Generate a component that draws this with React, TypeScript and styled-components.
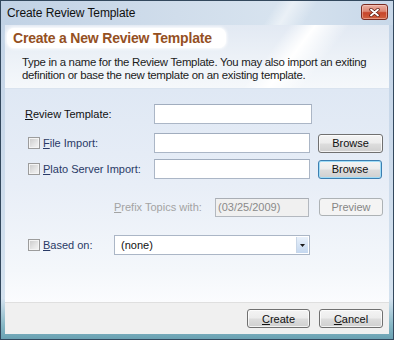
import React from 'react';
import styled, { createGlobalStyle } from 'styled-components';

const Global = createGlobalStyle`
  html, body { margin: 0; padding: 0; background: #ffffff; }
  body { font-family: "Liberation Sans", Arial, sans-serif; }
  * { box-sizing: border-box; }
  u { text-decoration-thickness: 1px; text-underline-offset: 1px; }
`;

const Window = styled.div`
  width: 394px;
  height: 340px;
  border: 1px solid #33485d;
  padding: 0 4px 5px 4px;
  display: flex;
  flex-direction: column;
  background: linear-gradient(
    to bottom,
    #c2d3e6 0%,
    #cad9ea 40%,
    #d4e2ef 88%,
    #86b7c5 96%,
    #6aa1b2 100%
  );
`;

const TitleBar = styled.div`
  height: 24px;
  display: flex;
  justify-content: space-between;
  align-items: flex-start;
  margin: 0 -4px;
  padding: 0 5px 0 6px;
  background:
    linear-gradient(122deg, rgba(255,255,255,0) 0%, rgba(255,255,255,0) 68%, rgba(255,255,255,0.5) 72%, rgba(255,255,255,0) 78%, rgba(255,255,255,0) 100%),
    linear-gradient(to right, #c1d2e5 0%, #d0ddeb 45%, #d7e3ef 70%, #c8d8e9 100%);
`;

const TitleText = styled.span`
  font-size: 12px;
  line-height: 24px;
  color: #101010;
  letter-spacing: -0.1px;
`;

const CloseButton = styled.div`
  margin-top: 3px;
  width: 27px;
  height: 16px;
  border: 1px solid #7a2b20;
  border-radius: 3px;
  display: flex;
  align-items: center;
  justify-content: center;
  background: linear-gradient(
    to bottom,
    #eab0a2 0%,
    #dc8672 45%,
    #c7452a 55%,
    #d0603f 100%
  );
  box-shadow: inset 0 0 0 1px rgba(255, 220, 210, 0.45);
`;

const Client = styled.div`
  height: 309px;
  display: flex;
  flex-direction: column;
  background: #ffffff;
`;

const Header = styled.div`
  height: 64px;
  display: flex;
  flex-direction: column;
  align-items: flex-start;
  border-bottom: 1px solid #d9e3ef;
  background:
    linear-gradient(127deg, rgba(255,255,255,0) 0%, rgba(255,255,255,0) 66%, rgba(255,255,255,1) 72%, rgba(255,255,255,0) 80%, rgba(255,255,255,0) 100%),
    linear-gradient(to bottom, #e2e9f3 0%, #ecf1f7 50%, #f5f8fb 100%);
`;

const InstructionPill = styled.div`
  margin: 3px 0 0 2px;
  width: 219px;
  height: 20px;
  border-radius: 7px;
  background: #ffffff;
  box-shadow: 0 0 3px 1px rgba(255, 255, 255, 0.9);
  padding-left: 6px;
  display: flex;
  align-items: center;
`;

const InstructionText = styled.span`
  font-size: 14px;
  font-weight: bold;
  color: #95501f;
  letter-spacing: -0.2px;
`;

const Description = styled.div`
  margin: 8px 0 0 17px;
  font-size: 11.4px;
  line-height: 13px;
  color: #1b1b1b;
  letter-spacing: -0.28px;
  white-space: nowrap;
`;

const Body = styled.div`
  height: 213px;
  padding: 15px 0 0 20px;
  display: flex;
  flex-direction: column;
  background: linear-gradient(to bottom, #dfe8f4 0%, #e8eef7 45%, #f4f7fb 85%, #fbfcfe 100%);
`;

const Row = styled.div<{ $mt: number }>`
  display: flex;
  align-items: center;
  height: 20px;
  margin-top: ${(p) => p.$mt}px;
`;

const LabelCell = styled.div<{ $w: number; $pl?: number }>`
  width: ${(p) => p.$w}px;
  padding-left: ${(p) => p.$pl ?? 0}px;
  display: flex;
  align-items: center;
  gap: 3px;
  flex-shrink: 0;
`;

const Label = styled.span<{ $tone?: 'plain' | 'navy' | 'disabled' }>`
  font-size: 11px;
  white-space: nowrap;
  color: ${(p) =>
    p.$tone === 'navy' ? '#293a66' : p.$tone === 'disabled' ? '#a3a3a3' : '#111111'};
`;

const CheckBox = styled.span`
  width: 12px;
  height: 12px;
  border: 1px solid #9c9c9c;
  background: linear-gradient(135deg, #c9c9c9 0%, #e6e6e6 60%, #f6f6f6 100%);
  box-shadow: inset 0 0 0 1px #f4f4f4;
  flex-shrink: 0;
`;

const TextBox = styled.div<{ $w: number; $h?: number; $disabled?: boolean }>`
  width: ${(p) => p.$w}px;
  height: ${(p) => p.$h ?? 20}px;
  border: 1px solid ${(p) => (p.$disabled ? '#b3b8bf' : '#abb6c6')};
  border-top-color: ${(p) => (p.$disabled ? '#a9aeb5' : '#a1adbe')};
  background: ${(p) => (p.$disabled ? '#f0f0f0' : '#ffffff')};
  font-size: 11px;
  color: #8a8a8a;
  padding-left: 2px;
  display: flex;
  align-items: center;
  flex-shrink: 0;
`;

const Button = styled.div<{
  $w: number;
  $h?: number;
  $ml?: number;
  $variant?: 'normal' | 'focused' | 'disabled';
}>`
  width: ${(p) => p.$w}px;
  height: ${(p) => p.$h ?? 19}px;
  margin-left: ${(p) => p.$ml ?? 0}px;
  border-radius: 3px;
  font-size: 11px;
  display: flex;
  align-items: center;
  justify-content: center;
  flex-shrink: 0;
  color: ${(p) => (p.$variant === 'disabled' ? '#868686' : '#101010')};
  border: 1px solid
    ${(p) =>
      p.$variant === 'focused' ? '#3c7fb1' : p.$variant === 'disabled' ? '#adb2b5' : '#707070'};
  background: ${(p) =>
    p.$variant === 'disabled'
      ? '#f4f4f4'
      : 'linear-gradient(to bottom, #f4f4f4 0%, #ececec 48%, #dddddd 52%, #cfcfcf 100%)'};
  box-shadow: ${(p) =>
    p.$variant === 'focused'
      ? 'inset 0 0 0 1px #9fdcf7'
      : p.$variant === 'disabled'
      ? 'none'
      : 'inset 0 0 0 1px rgba(255,255,255,0.75)'};
`;

const Combo = styled.div<{ $w: number }>`
  width: ${(p) => p.$w}px;
  height: 20px;
  border: 1px solid #abb6c6;
  background: #ffffff;
  display: flex;
  align-items: stretch;
  justify-content: space-between;
  padding: 1px;
  flex-shrink: 0;
`;

const ComboText = styled.span`
  font-size: 11px;
  color: #111111;
  padding-left: 5px;
  display: flex;
  align-items: center;
`;

const ComboArrow = styled.span`
  width: 12px;
  display: flex;
  align-items: center;
  justify-content: center;
  background: linear-gradient(to bottom, #e9f1fb 0%, #d6e4f5 50%, #c4d7ef 100%);
  border-left: 1px solid #c9d6e6;
`;

const Footer = styled.div`
  height: 32px;
  background: #f0f0f0;
  border-top: 1px solid #dfdfdf;
  display: flex;
  justify-content: flex-end;
  align-items: flex-start;
  gap: 9px;
  padding: 6px 6px 0 0;
`;

const CloseGlyph = () => (
  <svg width="11" height="9" viewBox="0 0 11 9">
    <path d="M2 1.5 L9 7.5 M9 1.5 L2 7.5" stroke="#5b1a10" strokeWidth="3.4" strokeLinecap="round" />
    <path d="M2 1.5 L9 7.5 M9 1.5 L2 7.5" stroke="#ffffff" strokeWidth="1.9" strokeLinecap="round" />
  </svg>
);

const ArrowGlyph = () => (
  <svg width="5" height="3" viewBox="0 0 5 3">
    <path d="M0 0 H5 L2.5 3 Z" fill="#1a1a1a" />
  </svg>
);

export default function App() {
  return (
    <>
      <Global />
      <Window>
        <TitleBar>
          <TitleText>Create Review Template</TitleText>
          <CloseButton>
            <CloseGlyph />
          </CloseButton>
        </TitleBar>
        <Client>
          <Header>
            <InstructionPill>
              <InstructionText>Create a New Review Template</InstructionText>
            </InstructionPill>
            <Description>
              Type in a name for the Review Template. You may also import an exiting
              <br />
              definition or base the new template on an existing template.
            </Description>
          </Header>
          <Body>
            <Row $mt={0}>
              <LabelCell $w={129}>
                <Label>
                  <u>R</u>eview Template:
                </Label>
              </LabelCell>
              <TextBox $w={158} />
            </Row>
            <Row $mt={9}>
              <LabelCell $w={129} $pl={3}>
                <CheckBox />
                <Label $tone="navy">
                  <u>F</u>ile Import:
                </Label>
              </LabelCell>
              <TextBox $w={156} />
              <Button $w={65} $ml={8}>
                Browse
              </Button>
            </Row>
            <Row $mt={6}>
              <LabelCell $w={129} $pl={3}>
                <CheckBox />
                <Label $tone="navy">
                  <u>P</u>lato Server Import:
                </Label>
              </LabelCell>
              <TextBox $w={156} />
              <Button $w={64} $ml={8} $variant="focused">
                Browse
              </Button>
            </Row>
            <Row $mt={18}>
              <LabelCell $w={89} />
              <LabelCell $w={101}>
                <Label $tone="disabled">
                  <u>P</u>refix Topics with:
                </Label>
              </LabelCell>
              <TextBox $w={94} $h={19} $disabled>
                (03/25/2009)
              </TextBox>
              <Button $w={64} $h={18} $ml={10} $variant="disabled">
                Preview
              </Button>
            </Row>
            <Row $mt={18}>
              <LabelCell $w={89} $pl={3}>
                <CheckBox />
                <Label $tone="navy">
                  <u>B</u>ased on:
                </Label>
              </LabelCell>
              <Combo $w={196}>
                <ComboText>(none)</ComboText>
                <ComboArrow>
                  <ArrowGlyph />
                </ComboArrow>
              </Combo>
            </Row>
          </Body>
          <Footer>
            <Button $w={63} $h={19}>
              <u>C</u>reate
            </Button>
            <Button $w={64} $h={19}>
              <u>C</u>ancel
            </Button>
          </Footer>
        </Client>
      </Window>
    </>
  );
}
